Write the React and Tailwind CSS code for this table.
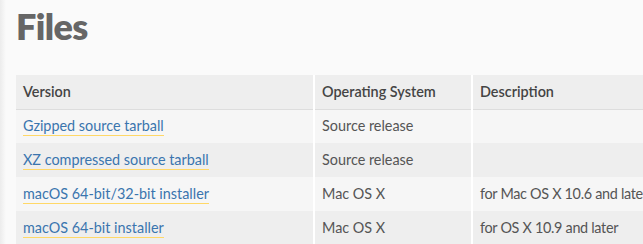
const rows = [
  { name: "Gzipped source tarball", os: "Source release", desc: "" },
  { name: "XZ compressed source tarball", os: "Source release", desc: "" },
  { name: "macOS 64-bit/32-bit installer", os: "Mac OS X", desc: "for Mac OS X 10.6 and later" },
  { name: "macOS 64-bit installer", os: "Mac OS X", desc: "for OS X 10.9 and later" },
];

export default function App() {
  return (
    <div className="relative h-[244px] w-[643px] overflow-hidden bg-[#fafafa] font-['Lato','Liberation_Sans',sans-serif]">
      <div className="pointer-events-none absolute inset-y-0 left-0 w-[6px] bg-[linear-gradient(90deg,#ececec,#fafafa)]" />
      <div className="pl-[16px] pt-[4px]">
        <h1 className="text-[36px] font-extrabold leading-[44px] tracking-[-0.6px] text-[#666]">Files</h1>
        <table className="mt-[27px] w-[700px] border-collapse text-[14.4px]">
          <thead>
            <tr className="h-[34px] border-b border-[#ddd] bg-[#eeeeee] text-left text-[#444]">
              <th className="w-[298px] border-r-2 border-white px-[7px] font-semibold">Version</th>
              <th className="w-[158px] border-r-2 border-white px-[7px] font-semibold">Operating System</th>
              <th className="px-[7px] font-semibold">Description</th>
            </tr>
          </thead>
          <tbody className="text-[#555]">
            {rows.map((r, i) => (
              <tr key={r.name} className={i % 2 === 0 ? "h-[34px] bg-[#f6f6f6]" : "h-[34px] bg-[#eeeeee]"}>
                <td className="border-r-2 border-white px-[7px]">
                  <a href="#" className="border-b border-[#ffd867] pb-[1px] text-[#3a75ae]">{r.name}</a>
                </td>
                <td className="border-r-2 border-white px-[7px]">{r.os}</td>
                <td className="whitespace-nowrap px-[7px] tracking-[-0.3px]">{r.desc}</td>
              </tr>
            ))}
          </tbody>
        </table>
      </div>
    </div>
  );
}
